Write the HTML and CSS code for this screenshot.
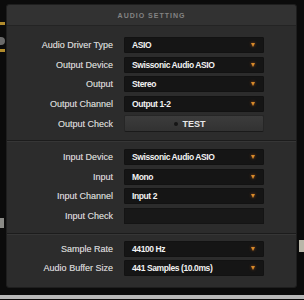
FILE: index.html
```html
<!DOCTYPE html>
<html lang="en">
<head>
    <meta charset="UTF-8">
    <meta name="viewport" content="width=device-width, initial-scale=1.0">
    <title>Audio Setting</title>
    <link rel="stylesheet" href="styles.css">
</head>
<body>
    <!-- bits of the app showing behind the dialog -->
    <div class="app-bit bit-yellow bit-a"></div>
    <div class="app-bit bit-knob"></div>
    <div class="app-bit bit-yellow bit-b"></div>
    <div class="app-bit bit-gray bit-c"></div>
    <div class="app-bit bit-gray bit-d"></div>

    <div class="dialog">
        <div class="dialog-header">AUDIO SETTING</div>

        <div class="section">
            <div class="row">
                <label>Audio Driver Type</label>
                <div class="select">ASIO<span class="arrow"></span></div>
            </div>
            <div class="row">
                <label>Output Device</label>
                <div class="select">Swissonic Audio ASIO<span class="arrow"></span></div>
            </div>
            <div class="row">
                <label>Output</label>
                <div class="select">Stereo<span class="arrow"></span></div>
            </div>
            <div class="row">
                <label>Output Channel</label>
                <div class="select">Output 1-2<span class="arrow"></span></div>
            </div>
            <div class="row">
                <label>Output Check</label>
                <button class="test-btn"><span class="dot"></span>TEST</button>
            </div>
        </div>

        <div class="section">
            <div class="row">
                <label>Input Device</label>
                <div class="select">Swissonic Audio ASIO<span class="arrow"></span></div>
            </div>
            <div class="row">
                <label>Input</label>
                <div class="select">Mono<span class="arrow"></span></div>
            </div>
            <div class="row">
                <label>Input Channel</label>
                <div class="select">Input 2<span class="arrow"></span></div>
            </div>
            <div class="row">
                <label>Input Check</label>
                <div class="meter"></div>
            </div>
        </div>

        <div class="section last">
            <div class="row">
                <label>Sample Rate</label>
                <div class="select">44100 Hz<span class="arrow"></span></div>
            </div>
            <div class="row">
                <label>Audio Buffer Size</label>
                <div class="select">441 Samples (10.0ms)<span class="arrow"></span></div>
            </div>
        </div>
    </div>

    <div class="app-floor"></div>
</body>
</html>
```

FILE: styles.css
```css
* {
    margin: 0;
    padding: 0;
    box-sizing: border-box;
    font-family: "Liberation Sans", Arial, sans-serif;
}

body {
    width: 304px;
    height: 300px;
    padding: 4px 6px 0 6px;
    background-color: #0b0b0b;
    overflow: hidden;
    position: relative;
}

.app-bit {
    position: absolute;
    left: 0;
    width: 5px;
}

.bit-yellow {
    height: 3px;
    background: #b08a2c;
}

.bit-a { top: 22px; }
.bit-b { top: 49px; }

.bit-knob {
    top: 37px;
    left: -3px;
    width: 8px;
    height: 8px;
    border-radius: 50%;
    background: #6a6a6a;
}

.bit-gray {
    background: #8a8a86;
}

.bit-c {
    top: 218px;
    height: 10px;
    left: 0;
    width: 4px;
}

.bit-d {
    top: 240px;
    height: 12px;
    left: 299px;
    width: 5px;
    background: #b9b6a8;
}

.dialog {
    position: relative;
    width: 291px;
    background: #2c2c2c;
    border: 1px solid #1e1e1e;
    border-radius: 3px;
}

.dialog-header {
    height: 21px;
    line-height: 21px;
    text-align: center;
    font-size: 7px;
    font-weight: bold;
    letter-spacing: 1px;
    color: #838383;
    background: #323232;
    border-bottom: 1px solid #242424;
    border-radius: 3px 3px 0 0;
}

.section {
    display: flex;
    flex-direction: column;
    gap: 3.5px;
    padding: 11px 0 9px 0;
    border-bottom: 1px solid #1c1c1c;
    box-shadow: 0 1px 0 #363636;
}

.section + .section {
    padding-top: 8px;
}

.section.last {
    padding-top: 7px;
    padding-bottom: 11px;
    border-bottom: none;
    box-shadow: none;
}

.row {
    display: grid;
    grid-template-columns: 106px 140px;
    column-gap: 11px;
    align-items: center;
    height: 16px;
}

.row label {
    text-align: right;
    font-size: 9px;
    color: #c6c6c6;
    text-shadow: 0 0 0.4px #c6c6c6;
}

.select {
    position: relative;
    height: 16px;
    padding-left: 7px;
    font-size: 8.5px;
    font-weight: bold;
    letter-spacing: -0.4px;
    color: #f2f2f2;
    background: #151515;
    border: 1px solid #121212;
    border-radius: 1px;
    line-height: 14px;
}

.arrow {
    position: absolute;
    right: 8px;
    top: 5px;
    width: 0;
    height: 0;
    border-left: 2.5px solid transparent;
    border-right: 2.5px solid transparent;
    border-top: 4px solid #d88a2a;
    filter: drop-shadow(0 0 1.5px #a0501a);
}

.test-btn {
    display: flex;
    align-items: center;
    justify-content: center;
    gap: 4px;
    height: 17px;
    font-size: 9px;
    font-weight: bold;
    color: #e8e8e8;
    background: linear-gradient(#3c3c3c, #323232);
    border: 1px solid #262626;
    border-bottom-color: #1a1a1a;
    border-radius: 2px;
}

.dot {
    width: 4px;
    height: 4px;
    border-radius: 50%;
    background: #151515;
    margin-left: -8px;
}

.meter {
    height: 16px;
    background: #181818;
    border: 1px solid #141414;
}

.app-floor {
    margin-top: 7px;
    margin-left: -6px;
    width: 304px;
    height: 4px;
    background: #b8b8b8;
}
```
